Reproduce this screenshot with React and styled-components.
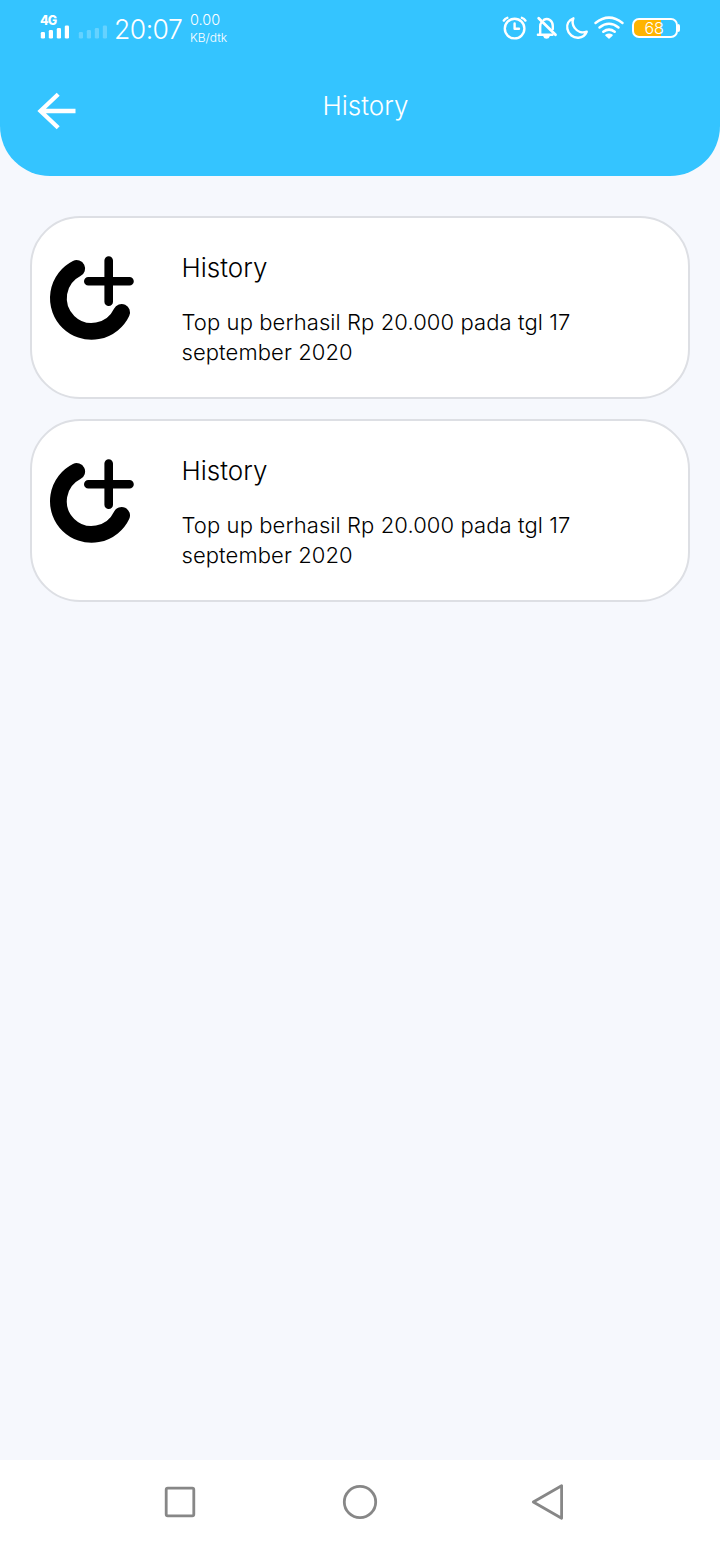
import React from "react";
import styled, { createGlobalStyle } from "styled-components";

const GlobalStyle = createGlobalStyle`
  * { box-sizing: border-box; }
  body {
    margin: 0;
    background: #f6f8fd;
    font-family: Inter, "Open Sans", sans-serif;
    font-weight: 300;
  }
`;

const Screen = styled.div`
  display: flex;
  flex-direction: column;
  width: 720px;
  height: 1544px;
  background: #f6f8fd;
`;

const Header = styled.header`
  height: 176px;
  background: #34c4ff;
  border-radius: 0 0 50px 50px;
  color: #fff;
`;

const StatusBar = styled.div`
  display: flex;
  justify-content: space-between;
  height: 56px;
  padding: 0 40px;
`;

const StatusGroup = styled.div`
  display: flex;
  align-items: flex-start;
`;

const Signal = styled.div`
  width: 38px;
  padding-top: 14px;
`;

const NetworkType = styled.div`
  height: 11px;
  font-size: 12.5px;
  line-height: 13px;
  font-weight: 800;
  letter-spacing: -0.8px;
`;

const Bars = styled.svg`
  display: block;
  width: 29px;
  height: 14px;
  opacity: ${(p) => (p.$faded ? 0.24 : 1)};
`;

const SecondSignal = styled.div`
  width: 36px;
  padding-top: 25px;
`;

const Clock = styled.div`
  width: 76px;
  padding-top: 12px;
  font-size: 26.5px;
  line-height: 34px;
  letter-spacing: -0.5px;
`;

const Speed = styled.div`
  padding-top: 11px;
  font-size: 14.5px;
  line-height: 18px;
`;

const SpeedUnit = styled.div`
  font-size: 12px;
  line-height: 18px;
`;

const StatusIcon = styled.svg`
  display: block;
  flex: none;
  width: ${(p) => p.$w}px;
  height: 56px;
  fill: none;
  stroke: #fff;
  stroke-width: 2.4;
  stroke-linecap: round;
  stroke-linejoin: round;
`;

const Battery = styled.div`
  display: flex;
  align-items: center;
  height: 56px;
  padding-left: 7px;
`;

const BatteryBody = styled.div`
  display: flex;
  align-items: center;
  justify-content: center;
  width: 46px;
  height: 20px;
  padding-right: 2px;
  border: 2px solid #fff;
  border-radius: 7px;
  background: linear-gradient(to right, #ffb400 27px, transparent 27px) no-repeat;
  font-size: 16px;
  line-height: 16px;
  letter-spacing: -0.2px;
`;

const BatteryTip = styled.div`
  width: 2px;
  height: 8px;
  border-radius: 0 2px 2px 0;
  background: #fff;
`;

const TitleBar = styled.div`
  display: grid;
  grid-template-columns: 38px 1fr 38px;
  padding: 30px 25px 0 36px;
`;

const BackButton = styled.button`
  width: 42px;
  height: 50px;
  padding: 0;
  border: 0;
  background: none;
`;

const BackArrow = styled.svg`
  display: block;
  fill: none;
  stroke: #fff;
  stroke-width: 4.3;
`;

const Title = styled.h1`
  margin: 0;
  padding-top: 4px;
  text-align: center;
  font-size: 26px;
  line-height: 32px;
  font-weight: 300;
`;

const List = styled.main`
  display: flex;
  flex: 1;
  flex-direction: column;
  gap: 20px;
  padding: 40px 30px 0;
`;

const Card = styled.article`
  display: flex;
  height: 183px;
  padding: 34px 80px 0 16px;
  border: 2px solid #dddfe4;
  border-radius: 50px;
  background: #fff;
  color: #000;
`;

const TopUpIcon = styled.svg`
  display: block;
  flex: none;
  width: 90px;
  height: 92px;
  margin-right: 43.5px;
  fill: none;
  stroke: #000;
  stroke-linecap: round;
`;

const CardTitle = styled.h2`
  margin: 0 0 23px;
  font-size: 26px;
  line-height: 32px;
  font-weight: 300;
`;

const CardText = styled.p`
  margin: 0;
  font-size: 22px;
  line-height: 30px;
  letter-spacing: 0.09px;
`;

const NavBar = styled.nav`
  display: grid;
  grid-template-columns: 180px 188px 40px;
  height: 84px;
  padding: 22px 152px 0 160px;
  background: #fff;
`;

const NavIcon = styled.svg`
  display: block;
  width: 40px;
  height: 40px;
  fill: none;
  stroke: #878787;
  stroke-width: 2.8;
  stroke-linejoin: round;
`;

function SignalBars({ faded }) {
  return (
    <Bars viewBox="0 0 29 14" fill="#fff" $faded={faded}>
      <rect x="0.8" y="7" width="4.2" height="6.5" rx="1.3" />
      <rect x="8.8" y="5" width="4.2" height="8.5" rx="1.3" />
      <rect x="16.8" y="3" width="4.2" height="10.5" rx="1.3" />
      <rect x="24.8" y="0.5" width="4.2" height="13" rx="1.3" />
    </Bars>
  );
}

function HistoryCard({ title, text }) {
  return (
    <Card>
      <TopUpIcon viewBox="48 252 90 92">
        <path d="M76.5 268.8A33.2 33.2 0 1 0 121.4 312.7" strokeWidth="16.8" transform="translate(0.2 -0.3)" />
        <path d="M108.7 260.5V301.7M88.3 281.2H129.5" strokeWidth="8.6" />
      </TopUpIcon>
      <div>
        <CardTitle>{title}</CardTitle>
        <CardText>{text}</CardText>
      </div>
    </Card>
  );
}

const entries = [
  { id: 1, title: "History", text: "Top up berhasil Rp 20.000 pada tgl 17 september 2020" },
  { id: 2, title: "History", text: "Top up berhasil Rp 20.000 pada tgl 17 september 2020" },
];

export default function App() {
  return (
    <Screen>
      <GlobalStyle />
      <Header>
        <StatusBar>
          <StatusGroup>
            <Signal>
              <NetworkType>4G</NetworkType>
              <SignalBars />
            </Signal>
            <SecondSignal>
              <SignalBars faded />
            </SecondSignal>
            <Clock>20:07</Clock>
            <Speed>
              0.00
              <SpeedUnit>KB/dtk</SpeedUnit>
            </Speed>
          </StatusGroup>
          <StatusGroup>
            <StatusIcon $w={30} viewBox="500 0 30 56">
              <circle cx="514.6" cy="28.6" r="9.8" />
              <path d="M514.6 23.5V28.8H519" />
              <path d="M503.8 20.6Q505 18.4 507.3 17.8M525.4 20.6Q524.2 18.4 521.9 17.8" />
            </StatusIcon>
            <StatusIcon $w={32} viewBox="530 0 32 56">
              <path d="M540.2 34V26.5Q540.2 23.7 541.8 22M543.8 19.9C548 17.6 552.8 20.6 552.8 26V29M537.9 34.7H552.5" />
              <path d="M538.7 18.2L555.5 34.8" strokeWidth="2.8" />
              <path d="M544 36.3H549Q548.4 38 546.5 38Q544.6 38 544 36.3Z" fill="#fff" strokeWidth="1.5" />
            </StatusIcon>
            <StatusIcon $w={29} viewBox="562 0 29 56">
              <path d="M573.4 18.3C568.5 20 566.5 24.4 567.4 29C568.4 34.4 573.2 38.2 578.6 37.7C582.3 37.3 585.4 35 586.7 31.7C582 33.3 577.2 31.5 574.6 27.9C572.4 24.9 572.1 21.5 573.4 18.3Z" />
            </StatusIcon>
            <StatusIcon $w={34} viewBox="591 0 34 56">
              <path d="M595.5 23Q609 12.3 622.5 23M599.5 27.5Q609 20 618.5 27.5M603.3 31.8Q609 27.4 614.7 31.8" strokeWidth="2.5" />
              <path d="M605.9 35.2Q609 33.3 612.1 35.2L609 38.1Z" fill="#fff" strokeWidth="1.4" />
            </StatusIcon>
            <Battery>
              <BatteryBody>68</BatteryBody>
              <BatteryTip />
            </Battery>
          </StatusGroup>
        </StatusBar>
        <TitleBar>
          <BackButton aria-label="Back">
            <BackArrow width="42" height="50" viewBox="36 86 42 50">
              <path d="M75.5 111H41M58.2 94.2L40.5 111L58.2 127.8" />
            </BackArrow>
          </BackButton>
          <Title>History</Title>
        </TitleBar>
      </Header>
      <List>
        {entries.map((e) => (
          <HistoryCard key={e.id} title={e.title} text={e.text} />
        ))}
      </List>
      <NavBar>
        <NavIcon viewBox="160 1482 40 40">
          <rect x="166.2" y="1488.2" width="27.6" height="27.6" rx="1.5" />
        </NavIcon>
        <NavIcon viewBox="340 1482 40 40">
          <circle cx="360" cy="1502" r="15.7" />
        </NavIcon>
        <NavIcon viewBox="528 1482 40 40">
          <path d="M533.3 1502L561.6 1485.7V1518.3Z" />
        </NavIcon>
      </NavBar>
    </Screen>
  );
}
